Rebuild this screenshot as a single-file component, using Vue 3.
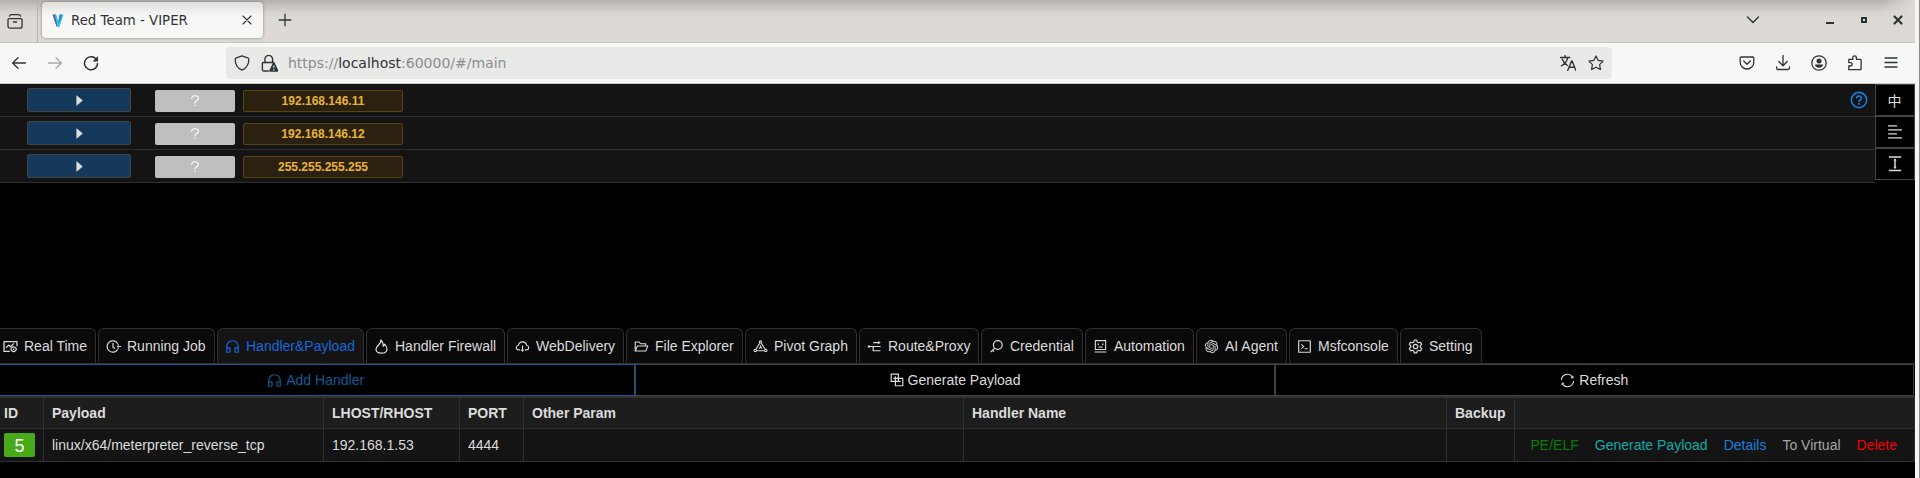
<script setup>
import { h } from 'vue'

const icons = {
  // browser chrome, 16 unit grid
  archive: { s: ['M2.2 5.6h11.6a1.2 1.2 0 0 1 1.2 1.2v6.4a2 2 0 0 1-2 2H3a2 2 0 0 1-2-2V6.8a1.2 1.2 0 0 1 1.2-1.2z', 'M2.5 3.2a2 2 0 0 1 1.8-1.6h7.4a2 2 0 0 1 1.8 1.6', 'M6.5 9h3'] },
  cross: { s: ['M4 4l8 8M12 4l-8 8'], w: 1.1 },
  plus: { s: ['M8 2.2v11.6M2.2 8h11.6'] },
  back: { s: ['M14.5 8H1.5M7 2.8L1.6 8 7 13.2'] },
  forward: { s: ['M1.5 8h13M9 2.8L14.4 8 9 13.2'] },
  reload: { s: ['M13.6 5A6.5 6.5 0 1 0 14.5 8.4'], f: ['M15 1v5.5H9.5z'], w: 1.5 },
  shield: { s: ['M8 .9l5.6 1.9c.8.3 1.2.7 1.2 1.5C14.8 9.5 12.5 13.3 8 15.2 3.5 13.3 1.2 9.5 1.2 4.3c0-.8.4-1.2 1.2-1.5z'] },
  lock: { s: ['M3.7 7V4a3.6 3.6 0 0 1 7.2 0v3', 'M7 15H2.5a1.2 1.2 0 0 1-1.2-1.2V8.2A1.2 1.2 0 0 1 2.5 7h9.3'], f: ['M11.3 7.2a.9.9 0 0 1 1.6 0l3.4 7.2a.8.8 0 0 1-.8 1.3H8.7a.8.8 0 0 1-.8-1.3zM11.5 9.8l.2 2.7h.8l.2-2.7zM11.5 13.3v1.2h1.2v-1.2z'] },
  translate: { s: ['M.5 2.5h9.3M5.1.5v2M7.7 2.7C7 6.5 4.5 9.3 1.3 11M2.3 4.2c1 3 3 5 5.2 6.3', 'M7.8 15.3L11.6 6h.6l3.6 9.3M9.2 12.2h5.3'], w: 1.4 },
  star: { s: ['M8 .9l2.2 4.5 4.9.7-3.5 3.5.8 4.9L8 12.2l-4.4 2.3.8-4.9L.9 6.1l4.9-.7z'], w: 1.2 },
  pocket: { s: ['M2.2 2h11.6a1 1 0 0 1 1 1v4.2a6.8 6.8 0 0 1-13.6 0V3a1 1 0 0 1 1-1z', 'M4.7 6L8 9.2 11.3 6'] },
  download: { s: ['M8 .5v10M3.8 6.5L8 10.7l4.2-4.2', 'M1.6 11.8v1.4a1.3 1.3 0 0 0 1.3 1.3h10.2a1.3 1.3 0 0 0 1.3-1.3v-1.4'] },
  account: { s: ['M8 .8a7.2 7.2 0 1 0 0 14.4A7.2 7.2 0 0 0 8 .8z'], f: ['M8 3.5a2.5 2.5 0 1 0 0 5 2.5 2.5 0 0 0 0-5z', 'M3.9 9.5h8.2c0 1.9-1.8 3.3-4.1 3.3s-4.1-1.4-4.1-3.3z'] },
  puzzle: { s: ['M1.8 14.7V11h1.7a1.7 1.7 0 0 0 0-3.4H1.8V4.3h4V2.6a1.8 1.8 0 0 1 3.6 0v1.7h3.8a.9.9 0 0 1 .9.9v8.6a.9.9 0 0 1-.9.9z'] },
  menu: { s: ['M2 3h12M2 7.5h12M2 12h12'] },
  chevron: { s: ['M2.5 5L8 10.5 13.5 5'], w: 1.4 },
  minimize: { f: ['M4 10h8v2H4z'] },
  restore: { f: ['M5 5h6v6H5zM7 7v2h2V7z'] },
  closeWin: { s: ['M4.5 4.5l7 7M11.5 4.5l-7 7'], w: 2.2 },

  // application, 1024 unit grid
  caret: { b: 1024, f: ['M715.8 493.5L335 165.1c-14.2-12.2-35-1.2-35 18.5v656.8c0 19.7 20.8 30.7 35 18.5l380.8-328.4c10.9-9.4 10.9-27.6 0-37z'] },
  help: { b: 1024, w: 80, s: ['M512 120a392 392 0 1 0 0 784 392 392 0 0 0 0-784z', 'M390 425c0-70 54-120 122-120s122 48 122 115c0 58-34 82-74 105-34 20-48 40-48 85'], f: ['M466 665h92v84h-92z'] },
  question: { b: 1024, w: 84, s: ['M270 340c0-130 105-210 242-210s242 80 242 200c0 100-70 140-150 180-65 35-92 65-92 130v50'], f: ['M466 790h92v92h-92z'] },
  alignLeft: { b: 1024, w: 76, s: ['M120 160h500M120 388h784M120 616h500M120 844h784'] },
  colHeight: { b: 1024, w: 84, s: ['M160 108h704M160 876h704M512 270v444'], f: ['M512 180l90 130H422zM512 804l90-130H422z'] },
  fundView: { b: 1024, w: 80, p: -30, s: ['M470 832H96V192h832v300', 'M220 600l170-180 120 110 220-220', 'M710 540c-100 0-170 120-170 150s70 150 170 150 180-120 180-150-80-150-180-150z', 'M715 640v100'] },
  running: { b: 1024, w: 80, p: -20, s: ['M790 330A372 372 0 1 0 790 694', 'M480 290v270l120 90', 'M770 400h100M740 512h270M770 624h100'] },
  headset: { b: 1024, p: -60, f: ['M512 128c-212.1 0-384 171.9-384 384v360c0 13.3 10.7 24 24 24h184c35.3 0 64-28.7 64-64V624c0-35.3-28.7-64-64-64H200v-48c0-172.3 139.7-312 312-312s312 139.7 312 312v48H688c-35.3 0-64 28.7-64 64v208c0 35.3 28.7 64 64 64h184c13.3 0 24-10.7 24-24V512c0-212.1-171.9-384-384-384zM328 632v192H200V632h128zm496 192H696V632h128v192z'] },
  fire: { b: 1024, w: 76, p: -30, s: ['M470 90c40 170-60 250-160 340-90 80-150 150-150 260 0 140 140 246 352 246s352-110 352-270c0-130-60-220-150-310-10 70-40 110-90 140 10-180-40-310-154-406z'] },
  cloud: { b: 1024, w: 76, s: ['M350 740h-90C150 740 90 670 90 590c0-90 65-150 150-165 30-140 130-225 272-225s242 85 272 225c85 15 150 75 150 165 0 80-60 150-170 150h-90', 'M512 440v340'], f: ['M512 890l130-160H382z'] },
  folder: { b: 1024, p: -20, f: ['M928 444H820V330.4c0-17.7-14.3-32-32-32H473L355.7 186.2a8.15 8.15 0 00-5.5-2.2H96c-17.7 0-32 14.3-32 32v592c0 17.7 14.3 32 32 32h698c13 0 24.8-7.9 29.7-20l134-332c1.5-3.8 2.3-7.9 2.3-12 0-17.7-14.3-32-32-32zM136 256h188.5l119.6 114.4H748V444H238c-13 0-24.8 7.9-29.7 20L136 643.2V256zm635.3 512H159l103.3-256h612.4L771.3 768z'] },
  graph: { b: 1024, w: 74, s: ['M512 130a80 80 0 1 0 0 160 80 80 0 0 0 0-160z', 'M150 700a80 80 0 1 0 0 160 80 80 0 0 0 0-160z', 'M874 700a80 80 0 1 0 0 160 80 80 0 0 0 0-160z', 'M450 300L200 700M574 300l250 400M240 800h544M512 420v160M512 560l-100 90M512 560l100 90'] },
  route: { b: 1024, w: 80, s: ['M420 250h400M90 512h840M420 512v290h500'], f: ['M760 140l180 110-180 110z', 'M60 440h150v144H60z'] },
  key: { b: 1024, w: 82, s: ['M600 110a300 300 0 1 0 0 600 300 300 0 0 0 0-600z', 'M390 620L110 900M250 770l90 90'] },
  robot: { b: 1024, w: 76, s: ['M160 110h704v610H160zM110 890h804', 'M370 550h284'], f: ['M310 300h90v110h-90zM624 300h90v110h-90z'] },
  openai: { b: 24, p: 1.5, f: ['M22.2819 9.8211a5.9847 5.9847 0 0 0-.5157-4.9108 6.0462 6.0462 0 0 0-6.5098-2.9A6.0651 6.0651 0 0 0 4.9807 4.1818a5.9847 5.9847 0 0 0-3.9977 2.9 6.0462 6.0462 0 0 0 .7427 7.0966 5.98 5.98 0 0 0 .511 4.9107 6.051 6.051 0 0 0 6.5146 2.9001A5.9847 5.9847 0 0 0 13.2599 24a6.0557 6.0557 0 0 0 5.7718-4.2058 5.9894 5.9894 0 0 0 3.9977-2.9001 6.0557 6.0557 0 0 0-.7475-7.0729zm-9.022 12.6081a4.4755 4.4755 0 0 1-2.8764-1.0408l.1419-.0804 4.7783-2.7582a.7948.7948 0 0 0 .3927-.6813v-6.7369l2.02 1.1686a.071.071 0 0 1 .038.052v5.5826a4.504 4.504 0 0 1-4.4945 4.4944zm-9.6607-4.1254a4.4708 4.4708 0 0 1-.5346-3.0137l.142.0852 4.783 2.7582a.7712.7712 0 0 0 .7806 0l5.8428-3.3685v2.3324a.0804.0804 0 0 1-.0332.0615L9.74 19.9502a4.4992 4.4992 0 0 1-6.1408-1.6464zM2.3408 7.8956a4.485 4.485 0 0 1 2.3655-1.9728V11.6a.7664.7664 0 0 0 .3879.6765l5.8144 3.3543-2.0201 1.1685a.0757.0757 0 0 1-.071 0l-4.8303-2.7865A4.504 4.504 0 0 1 2.3408 7.872zm16.5963 3.8558L13.1038 8.364 15.1192 7.2a.0757.0757 0 0 1 .071 0l4.8303 2.7913a4.4944 4.4944 0 0 1-.6765 8.1042v-5.6772a.79.79 0 0 0-.407-.667zm2.0107-3.0231l-.142-.0852-4.7735-2.7818a.7759.7759 0 0 0-.7854 0L9.409 9.2297V6.8974a.0662.0662 0 0 1 .0284-.0615l4.8303-2.7866a4.4992 4.4992 0 0 1 6.6802 4.66zM8.3065 12.863l-2.02-1.1638a.0804.0804 0 0 1-.038-.0567V6.0742a4.4992 4.4992 0 0 1 7.3757-3.4537l-.142.0805L8.704 5.459a.7948.7948 0 0 0-.3927.6813zm1.0976-2.3654l2.602-1.4998 2.6069 1.4998v2.9994l-2.5974 1.4997-2.6067-1.4997Z'] },
  console: { b: 1024, p: -40, f: ['M516 673c0 4.4 3.4 8 7.5 8h185c4.1 0 7.5-3.6 7.5-8v-48c0-4.4-3.4-8-7.5-8h-185c-4.1 0-7.5 3.6-7.5 8v48zm-194.9 6.1l192-161c3.8-3.2 3.8-9.1 0-12.3l-192-160.9A7.95 7.95 0 00308 351v62.7c0 2.4 1 4.6 2.9 6.1L420.7 512l-109.8 92.2a8.1 8.1 0 00-2.9 6.1V673c0 6.8 7.9 10.5 13.1 6.1zM880 112H144c-17.7 0-32 14.3-32 32v736c0 17.7 14.3 32 32 32h736c17.7 0 32-14.3 32-32V144c0-17.7-14.3-32-32-32zm-40 728H184V184h656v656z'] },
  gear: { b: 1024, w: 76, p: -30, s: ['M430 100h164l28 125 85 49 122-38 82 142-94 86v98l94 86-82 142-122-38-85 49-28 125H430l-28-125-85-49-122 38-82-142 94-86v-98l-94-86 82-142 122 38 85-49z', 'M512 370a142 142 0 1 0 0 284 142 142 0 0 0 0-284z'] },
  blocks: { b: 1024, w: 80, p: -30, s: ['M110 110h500v500H110zM400 400h510v510H400z', 'M400 255v145M255 400h145M610 610h150'] },
  sync: { b: 1024, w: 72, p: -30, s: ['M120 480a392 392 0 0 1 710-200M904 544a392 392 0 0 1-710 200'], f: ['M890 170v190H700z', 'M134 854V664h190z'] }
}

// Inline SVG glyph inheriting the text colour
const Glyph = (props) => {
  const i = icons[props.name]
  const box = i.b || 16
  const pad = i.p || 0
  const size = props.size || 16
  return h('svg', { width: size, height: size, viewBox: `${-pad} ${-pad} ${box + 2 * pad} ${box + 2 * pad}` }, [
    ...(i.s || []).map((d) => h('path', {
      d, fill: 'none', stroke: 'currentColor', 'stroke-width': i.w || 1.3,
      'stroke-linejoin': 'round', 'stroke-linecap': box === 16 ? 'round' : 'butt'
    })),
    ...(i.f || []).map((d) => h('path', { d, fill: 'currentColor', 'fill-rule': 'evenodd' }))
  ])
}
Glyph.props = ['name', 'size']

const hosts = ['192.168.146.11', '192.168.146.12', '255.255.255.255']

const tabs = [
  { label: 'Real Time', icon: 'fundView', width: 101 },
  { label: 'Running Job', icon: 'running', width: 117 },
  { label: 'Handler&Payload', icon: 'headset', width: 147, active: true },
  { label: 'Handler Firewall', icon: 'fire', width: 139 },
  { label: 'WebDelivery', icon: 'cloud', width: 117 },
  { label: 'File Explorer', icon: 'folder', width: 117 },
  { label: 'Pivot Graph', icon: 'graph', width: 112 },
  { label: 'Route&Proxy', icon: 'route', width: 120 },
  { label: 'Credential', icon: 'key', width: 102 },
  { label: 'Automation', icon: 'robot', width: 109 },
  { label: 'AI Agent', icon: 'openai', width: 91 },
  { label: 'Msfconsole', icon: 'console', width: 109 },
  { label: 'Setting', icon: 'gear', width: 82 }
]
</script>

<template>
  <div class="window">
    <header class="tabstrip">
      <span class="overview"><Glyph name="archive" /></span>
      <div class="page-tab">
        <svg class="favicon" width="12" height="13" viewBox="0 0 12 13">
          <path d="M.5.5H4L7.500 12.500h-3z" fill="#7044a8" />
          <path d="M2.500.5H4L6.200 8 7.500.5h4L7.500 12.500h-2z" fill="#19d3e6" />
          <path d="M8 .5h2L7 9.500 6.200 8z" fill="#4b6fb8" />
        </svg>
        <span class="page-title">Red Team - VIPER</span>
        <Glyph name="cross" />
      </div>
      <Glyph class="new-tab" name="plus" />
      <div class="window-controls">
        <Glyph class="list-tabs" name="chevron" />
        <Glyph class="control" name="minimize" />
        <Glyph class="control" name="restore" />
        <Glyph class="control" name="closeWin" />
      </div>
    </header>

    <nav class="toolbar">
      <div class="nav-buttons">
        <Glyph name="back" />
        <Glyph class="disabled" name="forward" />
        <Glyph name="reload" />
      </div>
      <div class="address">
        <Glyph name="shield" />
        <Glyph class="lock" name="lock" :size="17" />
        <span class="url">https://<b>localhost</b>:60000/#/main</span>
        <Glyph name="translate" />
        <Glyph class="bookmark" name="star" />
      </div>
      <div class="actions">
        <Glyph name="pocket" />
        <Glyph name="download" />
        <Glyph name="account" />
        <Glyph name="puzzle" />
        <Glyph name="menu" />
      </div>
    </nav>

    <main class="app">
      <section class="top">
        <div class="hosts">
          <div v-for="(ip, n) in hosts" :key="ip" class="host">
            <div class="expand"><Glyph name="caret" :size="15" /></div>
            <div class="unknown"><Glyph name="question" :size="14" /></div>
            <div class="ip">{{ ip }}</div>
            <Glyph v-if="n === 0" class="help" name="help" :size="20" />
          </div>
        </div>
        <aside class="side">
          <div class="side-btn lang">中</div>
          <div class="side-btn"><Glyph name="alignLeft" :size="18" /></div>
          <div class="side-btn"><Glyph name="colHeight" :size="18" /></div>
        </aside>
      </section>

      <section class="bottom">
        <div class="tabs">
          <div
            v-for="t in tabs"
            :key="t.label"
            class="tab"
            :class="{ active: t.active }"
            :style="{ width: t.width + 'px' }"
          >
            <Glyph :name="t.icon" :size="15" /><span>{{ t.label }}</span>
          </div>
        </div>
        <div class="commands">
          <div class="command primary"><Glyph name="headset" :size="15" />Add Handler</div>
          <div class="command"><Glyph name="blocks" :size="14" />Generate Payload</div>
          <div class="command"><Glyph name="sync" :size="15" />Refresh</div>
        </div>
        <div class="grid">
          <div class="cells head">
            <div>ID</div><div>Payload</div><div>LHOST/RHOST</div><div>PORT</div>
            <div>Other Param</div><div>Handler Name</div><div>Backup</div><div></div>
          </div>
          <div class="cells">
            <div><span class="id-tag">5</span></div>
            <div>linux/x64/meterpreter_reverse_tcp</div>
            <div>192.168.1.53</div>
            <div>4444</div>
            <div></div><div></div><div></div>
            <div class="links">
              <a class="green">PE/ELF</a>
              <a class="teal">Generate Payload</a>
              <a class="blue">Details</a>
              <a class="grey">To Virtual</a>
              <a class="red">Delete</a>
            </div>
          </div>
        </div>
      </section>
    </main>
  </div>
</template>

<style>
body {
  margin: 0;
  background: #000;
}
</style>

<style scoped>
* {
  box-sizing: border-box;
}
.window {
  width: 1920px;
  height: 478px;
  overflow: hidden;
  padding-right: 4px;
  border-right: 1px solid #8b8987;
  background: #f6f5f4;
  color: #2e3436;
  font: 14px "Liberation Sans", Arial, sans-serif;
}
svg {
  display: block;
  flex: none;
}

/* browser chrome */
.tabstrip {
  display: flex;
  align-items: center;
  height: 43px;
  padding-bottom: 2px;
  border-bottom: 1px solid #c6c3bf;
  background:
    linear-gradient(90deg, transparent 1880px, #dddad5 1913px),
    linear-gradient(#b4b0ad, #c6c3bf 6px, #d6d3ce 12px, #dddad5 18px);
}
.overview {
  display: flex;
  align-items: center;
  width: 38px;
  height: 42px;
  margin-bottom: -2px;
  padding-left: 7px;
  border-right: 1px solid #b5b2ae;
}
.page-tab {
  display: flex;
  align-items: center;
  width: 221px;
  height: 36px;
  margin-left: 4px;
  padding: 0 8px 0 10px;
  border-radius: 4px;
  background: linear-gradient(#dededc, #f7f7f5 14px);
  box-shadow: 0 0 3px rgba(0, 0, 0, 0.4);
}
.page-title {
  flex: 1;
  margin-left: 7px;
  padding-top: 1px;
  font: 13.33px "DejaVu Sans", sans-serif;
}
.new-tab {
  margin-left: 14px;
}
.window-controls {
  display: flex;
  align-items: center;
  margin-left: auto;
  padding-right: 9px;
}
.list-tabs {
  margin-right: 61px;
}
.control + .control {
  margin-left: 18px;
}
.toolbar {
  display: flex;
  align-items: center;
  height: 41px;
  border-bottom: 1px solid #c9c7c4;
  background: #f7f7f5;
}
.nav-buttons {
  display: flex;
  gap: 20px;
  width: 226px;
  padding-left: 11px;
}
.disabled {
  color: #aaabab;
}
.address {
  display: flex;
  align-items: center;
  width: 1386px;
  height: 32px;
  padding: 0 8px;
  border-radius: 4px;
  background: #e9e9e8;
}
.lock {
  margin-left: 11px;
}
.url {
  flex: 1;
  margin-left: 10px;
  color: #8b8d8e;
  font: 14px "DejaVu Sans", sans-serif;
}
.url b {
  color: #2e3436;
  font-weight: 400;
}
.bookmark {
  margin-left: 12px;
}
.actions {
  display: flex;
  gap: 20px;
  margin-left: auto;
  padding-right: 16px;
}

/* application */
.app {
  display: flex;
  flex-direction: column;
  justify-content: space-between;
  height: 394px;
  padding-bottom: 16px;
  background: #000;
  color: #dcdcdc;
}
.top {
  display: flex;
  align-items: flex-start;
}
.hosts {
  width: 1875px;
}
.host {
  display: flex;
  align-items: center;
  height: 33px;
  padding-left: 27px;
  border-bottom: 1px solid #303030;
  background: #141414;
}
.expand,
.unknown,
.ip {
  display: flex;
  align-items: center;
  justify-content: center;
  height: 22px;
  border-radius: 2px;
}
.expand {
  width: 104px;
  height: 24px;
  border: 1px solid #434343;
  background: #15395b;
}
.unknown {
  width: 80px;
  margin: 2px 8px 0 24px;
  background: #bfbfbf;
  color: #fff;
}
.ip {
  width: 160px;
  margin-top: 2px;
  border: 1px solid #594214;
  background: #2b2111;
  color: #e8b339;
  font-size: 12px;
  font-weight: 700;
}
.help {
  margin: 0 6px 0 auto;
  color: #177ddc;
}
.side {
  width: 40px;
}
.side-btn {
  display: flex;
  align-items: center;
  justify-content: center;
  height: 32px;
  border: 1px solid #434343;
  background: #000;
}
.lang {
  padding: 0 1px 1px 0;
  font: 400 14px "Noto Sans CJK SC", sans-serif;
}

/* lower panel */
.tabs {
  display: flex;
  gap: 2px;
  height: 36px;
  margin-left: -5px;
  border-bottom: 1px solid #303030;
}
.tab {
  display: flex;
  align-items: center;
  gap: 6px;
  padding: 0 0 0 7px;
  border: 1px solid #303030;
  border-bottom: 0;
  border-radius: 6px 6px 0 0;
  background: #0a0a0a;
  white-space: nowrap;
}
.tab.active {
  background: #141414;
  color: #1668dc;
}
.commands {
  display: flex;
  margin: 0 1px 0 -4px;
}
.command {
  display: flex;
  flex: 1;
  align-items: center;
  justify-content: center;
  gap: 4px;
  height: 32px;
  border: 1px solid #434343;
  background: #000;
}
.command.primary {
  border-color: #165996;
  color: #165996;
}
.grid {
  border-top: 2px solid #303030;
}
.cells {
  display: grid;
  grid-template-columns: 44px 280px 136px 64px 440px 483px 68px 400px;
  height: 33px;
  background: #141414;
}
.cells > div {
  display: flex;
  align-items: center;
  padding-left: 8px;
  border-right: 1px solid #303030;
  border-bottom: 1px solid #303030;
}
.cells > div:first-child {
  padding-left: 4px;
}
.head {
  height: 31px;
  background: #1d1d1d;
  font-weight: 700;
}
.id-tag {
  width: 31px;
  height: 24px;
  border-radius: 2px;
  background: #49aa19;
  color: #fff;
  font-size: 18px;
  line-height: 26px;
  text-align: center;
}
.cells > .links {
  justify-content: flex-end;
  gap: 16px;
  padding-right: 17px;
}
.green { color: #008000; }
.teal { color: #13a8a8; }
.blue { color: #177ddc; }
.grey { color: #a6a6a6; }
.red { color: #f00000; }
</style>
